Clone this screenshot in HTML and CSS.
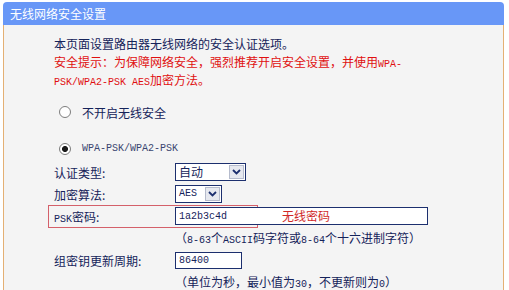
FILE: index.html
```html
<!DOCTYPE html>
<html lang="zh-CN">
<head>
    <meta charset="UTF-8">
    <meta name="viewport" content="width=device-width, initial-scale=1.0">
    <title>无线网络安全设置</title>
    <link rel="stylesheet" href="styles.css">
</head>
<body>
    <div class="panel">
        <div class="panel-title">无线网络安全设置</div>
        <div class="panel-body">
            <p class="intro">本页面设置路由器无线网络的安全认证选项。</p>
            <p class="warn">安全提示：为保障网络安全，强烈推荐开启安全设置，并使用<span class="en">WPA-</span><br><span class="en">PSK/WPA2-PSK AES</span>加密方法。</p>

            <!-- security mode -->
            <label class="option first"><input type="radio" name="mode">不开启无线安全</label>
            <label class="option second"><input type="radio" name="mode" checked><span class="en">WPA-PSK/WPA2-PSK</span></label>

            <div class="fields">
                <div class="row">
                    <span class="label">认证类型:</span>
                    <span class="select wide">
                        <span class="value">自动</span>
                        <span class="arrow"><svg width="9" height="6" viewBox="0 0 9 6"><path d="M1 1 L4.5 4.5 L8 1" /></svg></span>
                    </span>
                </div>
                <div class="row">
                    <span class="label">加密算法:</span>
                    <span class="select narrow">
                        <span class="value en">AES</span>
                        <span class="arrow"><svg width="9" height="6" viewBox="0 0 9 6"><path d="M1 1 L4.5 4.5 L8 1" /></svg></span>
                    </span>
                </div>
                <div class="row psk">
                    <span class="mark"></span>
                    <span class="label"><span class="en">PSK</span>密码:</span>
                    <span class="psk-field">
                        <input class="text long" type="text" value="1a2b3c4d">
                        <span class="psk-note">无线密码</span>
                    </span>
                </div>
                <p class="hint">（<span class="en">8-63</span>个<span class="en">ASCII</span>码字符或<span class="en">8-64</span>个十六进制字符）</p>
                <div class="row">
                    <span class="label">组密钥更新周期:</span>
                    <input class="text short" type="text" value="86400">
                </div>
                <p class="hint">（单位为秒，最小值为<span class="en">30</span>，不更新则为<span class="en">0</span>）</p>
            </div>
        </div>
    </div>
</body>
</html>
```

FILE: styles.css
```css
body {
    margin: 0;
    background-color: #fff;
    font-family: "Noto Sans CJK SC", sans-serif;
    font-size: 12px;
    color: #15235a;
}
p {
    margin: 0;
}
.en {
    font-family: "Liberation Mono", monospace;
    font-size: 10px;
    line-height: 1;
}
.panel {
    margin: 2px 0 0 3px;
    width: 501px;
}
.panel-title {
    height: 23px;
    line-height: 23px;
    padding-left: 7px;
    background-color: #6897f7;
    color: #fff;
    border-radius: 4px 4px 0 0;
}
.panel-body {
    background-color: #f4f4f4;
    border-left: 1px solid #e4b074;
    border-right: 1px solid #e4b074;
    padding: 10px 0 20px 50px;
}
.intro,
.warn {
    line-height: 18px;
}
.warn {
    color: #e01010;
}
.option {
    display: flex;
    align-items: center;
    height: 18px;
}
.option.first {
    margin-top: 14px;
}
.option.second {
    margin-top: 19px;
    color: #3a4670;
}
.option input {
    appearance: none;
    width: 12px;
    height: 12px;
    margin: 0 11px 0 5px;
    border: 1px solid #7d7d7d;
    border-radius: 50%;
    background: #fff;
}
.option input:checked {
    background: radial-gradient(circle, #1a1a1a 0 2.6px, #fff 3.4px);
}
.fields {
    margin-top: 3px;
}
.row {
    display: flex;
    align-items: center;
    height: 22px;
}
.label {
    width: 121px;
    flex-shrink: 0;
}
.hint {
    height: 22px;
    line-height: 22px;
    padding-left: 121px;
}
.select {
    display: inline-flex;
    align-items: center;
    box-sizing: border-box;
    height: 18px;
    border: 1px solid #1c2f6e;
    background-color: #fff;
}
.select.wide {
    width: 71px;
}
.select.narrow {
    width: 47px;
}
.select .value {
    flex: 1;
    padding-left: 3px;
    line-height: 16px;
}
.arrow {
    display: flex;
    align-items: center;
    justify-content: center;
    box-sizing: border-box;
    width: 15px;
    height: 14px;
    margin-right: 1px;
    background-color: #e6e8ef;
    border: 1px solid #b5bbcc;
}
.arrow path {
    fill: none;
    stroke: #1c2f6e;
    stroke-width: 1.8;
}
.text {
    box-sizing: border-box;
    height: 18px;
    margin: 0;
    padding: 0 3px;
    border: 1px solid #1c2f6e;
    background-color: #fff;
    color: #15235a;
    font-family: "Liberation Mono", monospace;
    font-size: 10px;
    outline: none;
}
.text.long {
    width: 253px;
}
.text.short {
    width: 67px;
    height: 17px;
}
.psk {
    position: relative;
}
.mark {
    position: absolute;
    left: -6px;
    top: 0;
    width: 210px;
    height: 23px;
    box-sizing: border-box;
    border: 1px solid #d4606a;
    pointer-events: none;
}
.psk-field {
    position: relative;
    display: flex;
}
.psk-note {
    position: absolute;
    left: 107px;
    top: 0;
    line-height: 18px;
    color: #d02828;
}
```
